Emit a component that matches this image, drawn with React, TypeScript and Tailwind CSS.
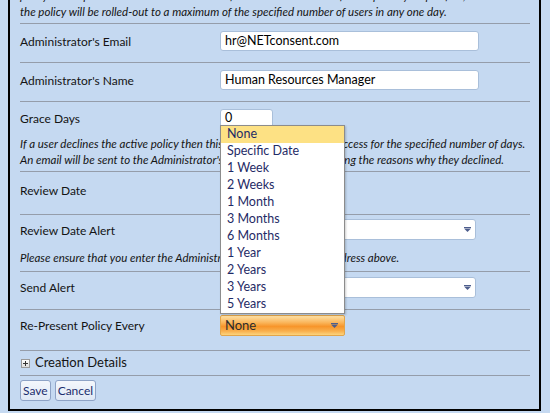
import React from "react";

const font = { fontFamily: "Lato, 'Open Sans', sans-serif" };

function Sep() {
  return <div className="h-px bg-[#959daa]" />;
}

function Arrow({ color = "#4d5d8c" }: { color?: string }) {
  return (
    <svg width="7" height="5" viewBox="0 0 7 5" className="block">
      <rect x="0" y="0" width="7" height="1" fill={color} />
      <path d="M0 1.5 H7 L3.5 5 Z" fill={color} />
    </svg>
  );
}

const options = [
  "None",
  "Specific Date",
  "1 Week",
  "2 Weeks",
  "1 Month",
  "3 Months",
  "6 Months",
  "1 Year",
  "2 Years",
  "3 Years",
  "5 Years",
];

export default function App() {
  return (
    <div
      className="h-[413px] w-[550px] overflow-hidden bg-[#c5d9f1] pl-[8px] pr-[9px] text-[12px] text-[#141414]"
      style={font}
    >
      <div className="-mt-[2px] border-2 border-t-0 border-black pl-[10px] pr-[9px] pb-[8px]">
        {/* intro text */}
        <div className="-mt-[12px] pb-[3px] text-[11.5px] italic leading-[16px]">
          <div className="whitespace-nowrap">
            policy will be presented to users in batches. If a maximum number of users per day is specified,
          </div>
          <div className="whitespace-nowrap">
            the policy will be rolled-out to a maximum of the specified number of users in any one day.
          </div>
        </div>
        <Sep />

        {/* Email */}
        <div className="flex items-center pt-[7px] pb-[11px]">
          <div className="w-[200px] pt-[1px]">Administrator's Email</div>
          <div className="flex h-[20px] w-[259px] items-center rounded-[3px] border border-[#a9bfda] bg-white pl-[4px] text-[12.5px] text-black">
            hr@NETconsent.com
          </div>
        </div>
        <Sep />

        {/* Name */}
        <div className="flex items-center pt-[7px] pb-[11px]">
          <div className="w-[200px] pt-[1px]">Administrator's Name</div>
          <div className="flex h-[20px] w-[259px] items-center rounded-[3px] border border-[#a9bfda] bg-white pl-[4px] text-[12.5px] text-black">
            Human Resources Manager
          </div>
        </div>
        <Sep />

        {/* Grace Days */}
        <div className="pt-[7px] pb-[3px]">
          <div className="flex items-center">
            <div className="w-[200px] pt-[1px]">Grace Days</div>
            <div className="flex h-[19px] w-[53px] items-center rounded-[3px] border border-[#a9bfda] bg-white pl-[4px] text-[12.5px] text-black">
              0
            </div>
          </div>
          <div className="mt-[8px] text-[11.5px] italic leading-[16px]">
            <div className="whitespace-nowrap">
              If a user declines the active policy then this policy will prevent your access for the specified number of days.
            </div>
            <div className="whitespace-nowrap">
              An email will be sent to the Administrator's email address also detailing the reasons why they declined.
            </div>
          </div>
        </div>
        <Sep />

        {/* Review Date */}
        <div className="flex items-center pt-[8px] pb-[14px]">
          <div className="w-[200px] pt-[1px]">Review Date</div>
          <div className="h-[20px] w-[120px] rounded-[3px] border border-[#a9bfda] bg-white" />
        </div>
        <Sep />

        {/* Review Date Alert */}
        <div className="pt-[4px] pb-[5px]">
          <div className="flex items-center">
            <div className="w-[200px] pt-[3px]">Review Date Alert</div>
            <div className="flex h-[21px] w-[256px] items-center justify-end rounded-[3px] border border-[#a9bfda] bg-white pr-[4px]">
              <Arrow />
            </div>
          </div>
          <div className="mt-[10px] text-[11.5px] italic leading-[16px] whitespace-nowrap">
            Please ensure that you enter the Administrator's name and email address above.
          </div>
        </div>
        <Sep />

        {/* Send Alert */}
        <div className="flex items-center pt-[5px] pb-[11px]">
          <div className="w-[200px] pt-[1px]">Send Alert</div>
          <div className="flex h-[21px] w-[256px] items-center justify-end rounded-[3px] border border-[#a9bfda] bg-white pr-[4px]">
            <Arrow />
          </div>
        </div>
        <Sep />

        {/* Re-Present */}
        <div className="flex items-center pt-[5px] pb-[14px]">
          <div className="w-[200px] pt-[1px]">Re-Present Policy Every</div>
          <div className="relative h-[21px] w-[125px]">
            <div className="flex h-full w-full items-center justify-between rounded-[2px] border border-[#e2a54a] bg-[linear-gradient(to_bottom,#fde0a4_0%,#fab55a_35%,#f7952a_55%,#f9b04e_80%,#fcd47e_100%)] pl-[4px] pr-[6px] text-[13px] text-[#2c2c2c]">
              <span>None</span>
              <Arrow color="#4d5d8c" />
            </div>
            {/* dropdown list */}
            <div className="absolute bottom-[calc(100%+1px)] left-0 w-full border border-[#8c8c8c] bg-white shadow-[1px_1px_2px_rgba(0,0,0,0.2)]">
              {options.map((o, i) => (
                <div
                  key={o}
                  className={
                    i === 0
                      ? "flex h-[17px] items-center bg-[#fde184] pl-[6px] text-[12.5px] text-[#1f2b66]"
                      : "flex h-[17px] items-center pl-[6px] text-[12.5px] text-[#1f2b66]"
                  }
                >
                  {o}
                </div>
              ))}
            </div>
          </div>
        </div>
        <Sep />

        {/* Creation Details */}
        <div className="flex h-[24px] items-center">
          <div className="ml-[1px] flex h-[9px] w-[9px] items-center justify-center border border-[#9a9a9a] bg-[linear-gradient(to_bottom,#ffffff,#dcdcdc)]">
            <svg width="5" height="5" viewBox="0 0 5 5" className="block">
              <rect x="0" y="2" width="5" height="1" fill="#333" />
              <rect x="2" y="0" width="1" height="5" fill="#333" />
            </svg>
          </div>
          <span className="ml-[5px] text-[13px]">Creation Details</span>
        </div>
        <Sep />

        {/* Buttons */}
        <div className="flex gap-[4px] pt-[4px]">
          <button className="flex h-[21px] items-center rounded-[3px] border border-[#8ea3c6] bg-[linear-gradient(to_bottom,#f4f7fc,#dfe8f5)] px-[2px] text-[12px] text-[#1b2d6e]">
            Save
          </button>
          <button className="flex h-[21px] items-center rounded-[3px] border border-[#8ea3c6] bg-[linear-gradient(to_bottom,#f4f7fc,#dfe8f5)] px-[2px] text-[12px] text-[#1b2d6e]">
            Cancel
          </button>
        </div>
      </div>
    </div>
  );
}
